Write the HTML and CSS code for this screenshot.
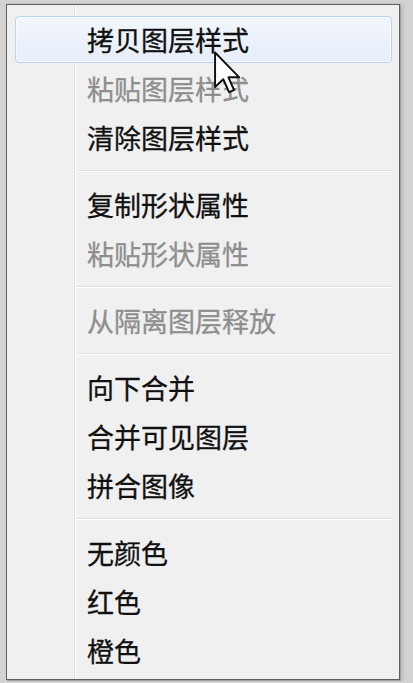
FILE: index.html
```html
<!DOCTYPE html>
<html lang="zh-CN">
  <head>
    <meta charset="UTF-8" />
    <title>图层菜单</title>
    <link rel="stylesheet" href="styles.css">
  </head>
  <body>
    <div class="menu">
      <div class="item active">拷贝图层样式</div>
      <div class="item disabled">粘贴图层样式</div>
      <div class="item">清除图层样式</div>
      <div class="sep"></div>
      <div class="item">复制形状属性</div>
      <div class="item disabled">粘贴形状属性</div>
      <div class="sep"></div>
      <div class="item disabled">从隔离图层释放</div>
      <div class="sep"></div>
      <div class="item">向下合并</div>
      <div class="item">合并可见图层</div>
      <div class="item">拼合图像</div>
      <div class="sep"></div>
      <div class="item">无颜色</div>
      <div class="item">红色</div>
      <div class="item">橙色</div>
    </div>

    <!-- mouse pointer over the first item -->
    <svg class="cursor" width="28" height="44" viewBox="0 0 13 20">
      <path
        d="M0.5 0.5 L0.5 16.5 L4.3 12.9 L7 18.9 L9.3 17.9 L6.7 12 L11.7 12 Z"
        fill="#fff"
        stroke="#111"
        stroke-width="0.9"
        stroke-linejoin="round"
      />
    </svg>
  </body>
</html>
```

FILE: styles.css
```css
:root {
  --outer: #d3d3d3;
  --menu-bg: #f0f0f0;
  --menu-border: #5e5e5e;
  --gutter-line: #e0e1e1;
  --text: #111;
  --text-disabled: #8e8e8e;
  --hover-border: #b7d3f4;
  --font-size: 27px;
}

html,
body {
  margin: 0;
  padding: 0;
}

body {
  width: 413px;
  height: 683px;
  overflow: hidden;
  position: relative;
  background-color: var(--outer);
  font-family: "Noto Sans CJK SC", "Noto Sans", sans-serif;
}

.menu {
  display: flex;
  flex-direction: column;
  box-sizing: border-box;
  width: 394px;
  margin: 4px 0 0 6px;
  padding: 10px 0 4px;
  border: 1px solid var(--menu-border);
  box-shadow: 1px 1px 0 #a0a0a0, 3px 0 4px rgba(0, 0, 0, 0.12);
  background:
    linear-gradient(
      to right,
      transparent 67px,
      var(--gutter-line) 67px,
      var(--gutter-line) 68px,
      #fff 68px,
      #fff 69px,
      transparent 69px
    ),
    var(--menu-bg);
}

.item {
  display: flex;
  align-items: center;
  flex: none;
  height: 47px;
  margin: 1px 7px 1px 8px;
  padding-left: 71px;
  border: 1px solid transparent;
  border-radius: 4px;
  box-sizing: border-box;
  font-size: var(--font-size);
  line-height: 1;
  color: var(--text);
  white-space: nowrap;
  -webkit-text-stroke: 0.3px currentColor;
}

.item.disabled {
  color: var(--text-disabled);
}

.item.active {
  border-color: var(--hover-border);
  background: linear-gradient(#f2f6fc, #e7eef9);
  box-shadow: inset 0 0 0 1px rgba(255, 255, 255, 0.6);
}

.sep {
  flex: none;
  height: 1px;
  margin: 8px 7px 8px 70px;
  background-color: #e0e0e0;
  border-bottom: 1px solid #fff;
}

.cursor {
  position: absolute;
  left: 214px;
  top: 51px;
}
```
